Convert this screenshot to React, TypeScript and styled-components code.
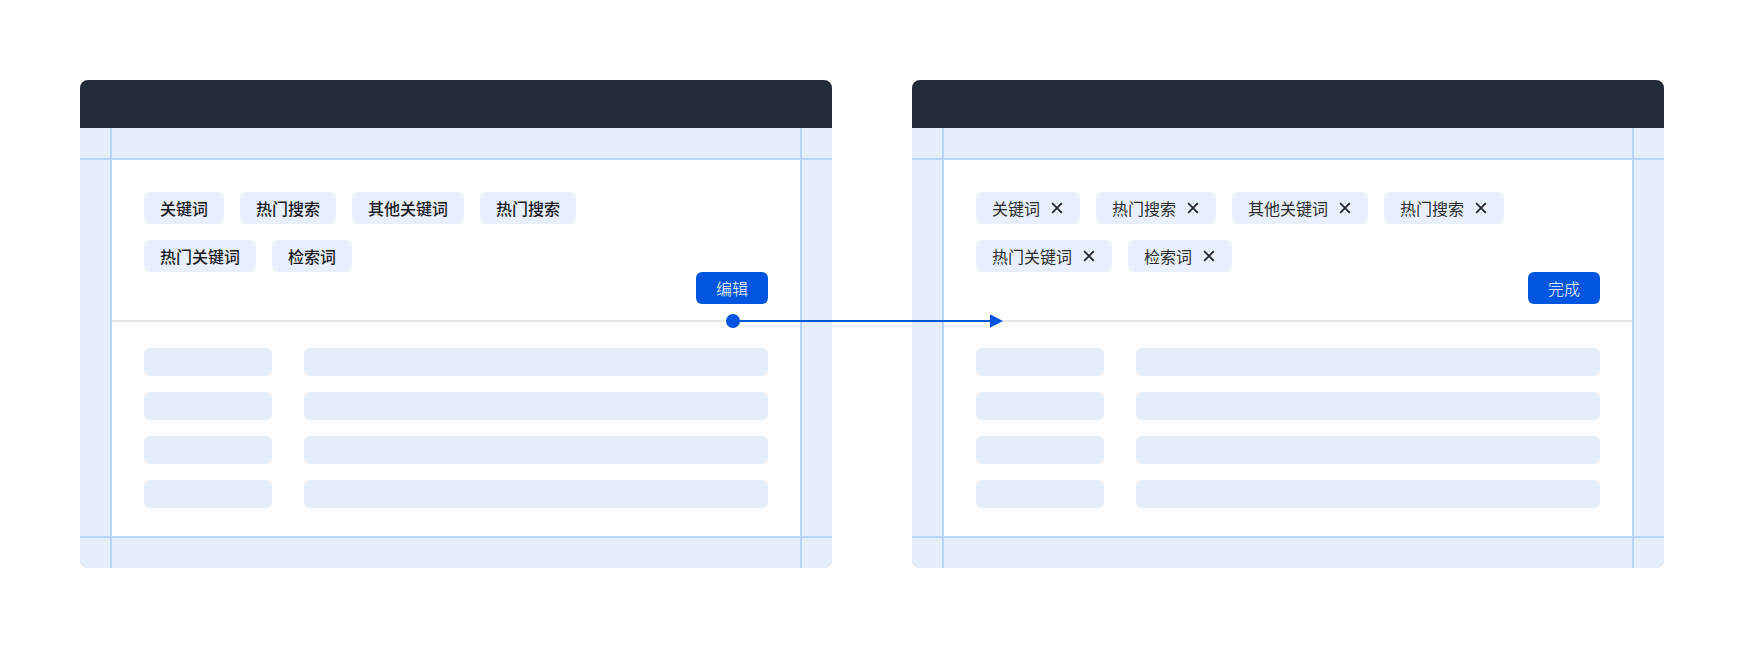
import React from "react";
import styled, { createGlobalStyle } from "styled-components";

const GlobalStyle = createGlobalStyle`
  html, body {
    margin: 0;
    padding: 0;
    background: #ffffff;
  }
  body {
    font-family: "Noto Sans CJK SC", "Noto Sans", sans-serif;
    -webkit-font-smoothing: antialiased;
  }
`;

const LINE = "#b7d5fb";
const BAND = "#e5effc";
const CHIP = "#e8f0fe";
const PRIMARY = "#0056e0";

const Stage = styled.div`
  position: relative;
  display: flex;
  gap: 80px;
  padding: 80px;
  width: 1744px;
  height: 648px;
  box-sizing: border-box;
`;

const Panel = styled.section`
  width: 752px;
  height: 488px;
  border-radius: 8px;
  overflow: hidden;
  display: flex;
  flex-direction: column;
`;

const TitleBar = styled.div`
  height: 48px;
  flex: none;
  background: #232a38;
`;

const Frame = styled.div`
  flex: 1;
  display: grid;
  grid-template-columns: 30px 1fr 30px;
  grid-template-rows: 30px 1fr 30px;
  gap: 2px;
  background: ${LINE};
`;

const Band = styled.div`
  background: ${BAND};
`;

const Content = styled.div`
  background: #ffffff;
  display: flex;
  flex-direction: column;
  min-width: 0;
`;

const TagSection = styled.div`
  padding: 32px 32px 16px;
`;

const TagList = styled.div`
  display: flex;
  flex-direction: column;
  gap: 16px;
`;

const TagRow = styled.div`
  display: flex;
  gap: 16px;
`;

const Tag = styled.span<{ $editing: boolean }>`
  display: inline-flex;
  align-items: center;
  height: 32px;
  padding: 0 16px;
  border-radius: 6px;
  background: ${CHIP};
  font-size: 16px;
  line-height: 32px;
  white-space: nowrap;
  color: ${(p) => (p.$editing ? "#2b2b2b" : "#1a1a1a")};
  font-weight: ${(p) => (p.$editing ? 400 : 500)};
`;

const RemoveIcon = styled.svg`
  width: 14px;
  height: 14px;
  margin-left: 10px;
  flex: none;
`;

const Actions = styled.div`
  display: flex;
  justify-content: flex-end;
`;

const ActionButton = styled.button`
  width: 72px;
  height: 32px;
  padding: 0;
  border: none;
  border-radius: 6px;
  background: ${PRIMARY};
  color: #ffffff;
  font-family: inherit;
  font-size: 16px;
  font-weight: 300;
  line-height: 32px;
  cursor: pointer;
`;

const Divider = styled.div`
  height: 2px;
  background: #e6e6e6;
`;

const List = styled.div`
  display: flex;
  flex-direction: column;
  gap: 16px;
  padding: 26px 32px 28px;
`;

const SkeletonRow = styled.div`
  display: flex;
  gap: 32px;
`;

const Bar = styled.div<{ $wide?: boolean }>`
  height: 28px;
  border-radius: 6px;
  background: ${BAND};
  ${(p) => (p.$wide ? "flex: 1;" : "width: 128px; flex: none;")}
`;

/* connector from the edit button's row to the edited state */
const Connector = styled.svg`
  position: absolute;
  left: 726px;
  top: 314px;
  width: 278px;
  height: 14px;
  overflow: visible;
`;

const tagRows = [
  ["关键词", "热门搜索", "其他关键词", "热门搜索"],
  ["热门关键词", "检索词"],
];

function Close() {
  return (
    <RemoveIcon viewBox="0 0 14 14" aria-hidden>
      <path d="M2.2 2.2 L11.8 11.8 M11.8 2.2 L2.2 11.8" stroke="#222" strokeWidth="1.7" fill="none" />
    </RemoveIcon>
  );
}

function KeywordPanel({ editing }: { editing: boolean }) {
  return (
    <Panel>
      <TitleBar />
      <Frame>
        <Band />
        <Band />
        <Band />
        <Band />
        <Content>
          <TagSection>
            <TagList>
              {tagRows.map((row, i) => (
                <TagRow key={i}>
                  {row.map((t, j) => (
                    <Tag key={j} $editing={editing}>
                      {t}
                      {editing && <Close />}
                    </Tag>
                  ))}
                </TagRow>
              ))}
            </TagList>
            <Actions>
              <ActionButton>{editing ? "完成" : "编辑"}</ActionButton>
            </Actions>
          </TagSection>
          <Divider />
          <List>
            {[0, 1, 2, 3].map((i) => (
              <SkeletonRow key={i}>
                <Bar />
                <Bar $wide />
              </SkeletonRow>
            ))}
          </List>
        </Content>
        <Band />
        <Band />
        <Band />
        <Band />
      </Frame>
    </Panel>
  );
}

export default function App() {
  return (
    <>
      <GlobalStyle />
      <Stage>
        <KeywordPanel editing={false} />
        <KeywordPanel editing />
        <Connector viewBox="0 0 278 14" aria-hidden>
          <circle cx="7" cy="7" r="7" fill={PRIMARY} />
          <line x1="7" y1="7" x2="266" y2="7" stroke={PRIMARY} strokeWidth="2" />
          <polygon points="264,0.3 277,7 264,13.7" fill={PRIMARY} />
        </Connector>
      </Stage>
    </>
  );
}
